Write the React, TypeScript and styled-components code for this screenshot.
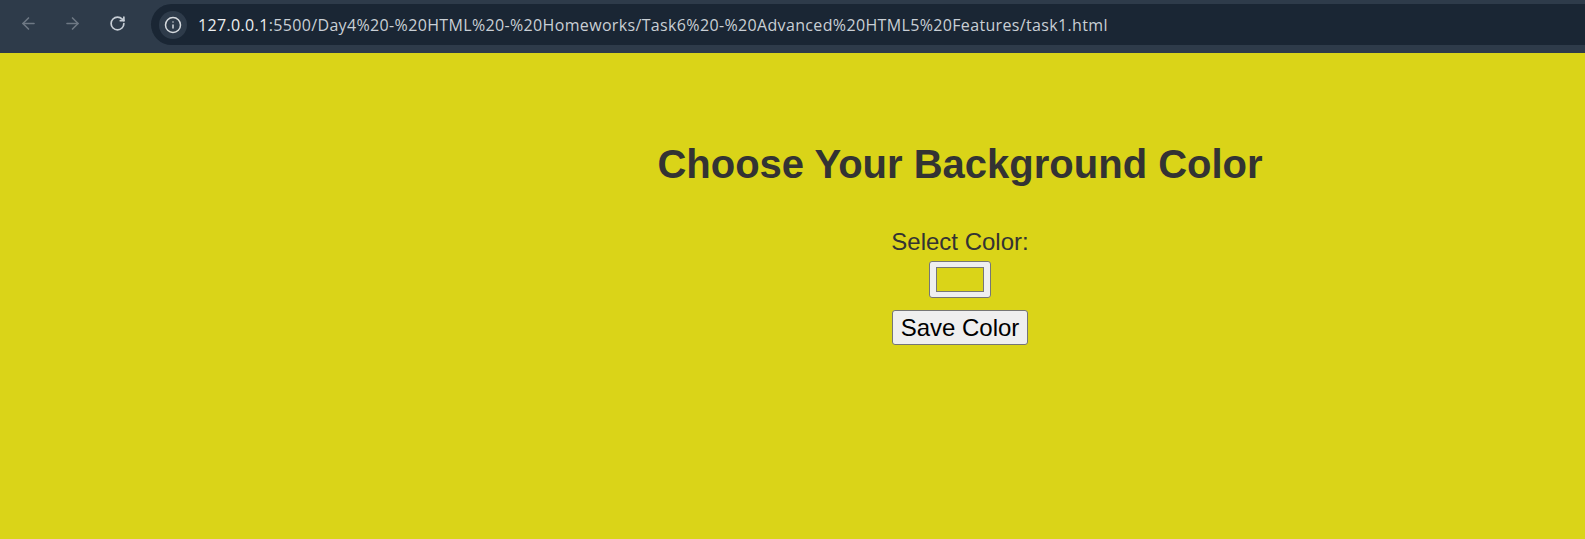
import { FC } from 'react';
import styled, { createGlobalStyle } from 'styled-components';
import { ArrowLeft, ArrowRight, RotateCw, Info } from 'lucide-react';

const GlobalStyle = createGlobalStyle`
    html, body {
        margin: 0;
        padding: 0;
        background: #dad418;
    }

    body {
        font-family: 'Liberation Sans', Arial, sans-serif;
    }
`;

export default function App() {
    return (
        <Page>
            <GlobalStyle />
            <BrowserBar>
                <NavButton dim>
                    <ArrowLeft size={19} strokeWidth={2} />
                </NavButton>
                <NavButton dim>
                    <ArrowRight size={19} strokeWidth={2} />
                </NavButton>
                <NavButton>
                    <RotateCw size={17} strokeWidth={2.4} />
                </NavButton>
                <AddressPill>
                    <SiteInfo>
                        <Info size={18} strokeWidth={2} />
                    </SiteInfo>
                    <Url>
                        <Host>127.0.0.1</Host>
                        :5500/Day4%20-%20HTML%20-%20Homeworks/Task6%20-%20Advanced%20HTML5%20Features/task1.html
                    </Url>
                </AddressPill>
            </BrowserBar>
            <Content>
                <ColorPicker />
            </Content>
        </Page>
    );
}

const ColorPicker: FC = () => (
    <Panel>
        <Title>Choose Your Background Color</Title>
        <Label htmlFor='bgColor'>Select Color:</Label>
        <ColorInput id='bgColor' type='color' defaultValue='#dad418' />
        <SaveButton type='button'>Save Color</SaveButton>
    </Panel>
);

const Page = styled.div`
    display: flex;
    flex-direction: column;
    min-height: 539px;
`;

const BrowserBar = styled.header`
    display: flex;
    align-items: center;
    height: 53px;
    padding: 0 0 6px 0;
    box-sizing: border-box;
    background: #2e3b4a;
`;

const NavButton = styled.div<{ dim?: boolean }>`
    display: flex;
    align-items: center;
    justify-content: center;
    width: 34px;
    height: 34px;
    margin-left: ${({ dim }) => (dim ? '10px' : '11px')};
    color: ${({ dim }) => (dim ? '#6e7884' : '#c7ced6')};

    &:first-child {
        margin-left: 11px;
    }
`;

const AddressPill = styled.div`
    display: flex;
    align-items: center;
    flex: 1;
    height: 41px;
    margin-left: 17px;
    margin-top: 2px;
    padding-left: 8px;
    border-radius: 21px 0 0 21px;
    background: #1a2634;
`;

const SiteInfo = styled.div`
    display: flex;
    align-items: center;
    justify-content: center;
    width: 28px;
    height: 28px;
    border-radius: 50%;
    background: #2e3b4a;
    color: #d6dade;
`;

const Url = styled.div`
    margin-left: 11px;
    font-family: 'Open Sans', 'Noto Sans', sans-serif;
    font-size: 16px;
    letter-spacing: 0.35px;
    color: #c9cfd5;
    white-space: nowrap;
`;

const Host = styled.span`
    color: #eceef0;
`;

const Content = styled.main`
    flex: 1;
    padding-left: 335px;
    background: #dad418;
`;

const Panel = styled.section`
    display: flex;
    flex-direction: column;
    align-items: center;
    padding-top: 88px;
    color: #333333;
`;

const Title = styled.h1`
    margin: 0 0 41px;
    font-size: 40px;
    font-weight: bold;
    line-height: 46px;
`;

const Label = styled.label`
    font-size: 24px;
    line-height: 28px;
`;

const ColorInput = styled.input`
    width: 62px;
    height: 37px;
    margin: 5px 0 0;
    padding: 5px 6px;
    box-sizing: border-box;
    border: 1px solid #767676;
    border-radius: 3px;
    background: #efefef;
    cursor: pointer;

    &::-webkit-color-swatch-wrapper {
        padding: 0;
    }

    &::-webkit-color-swatch {
        border: 1px solid #777777;
        border-radius: 0;
    }
`;

const SaveButton = styled.button`
    margin-top: 12px;
    height: 35px;
    padding: 0 8px;
    font-family: 'Liberation Sans', Arial, sans-serif;
    font-size: 24px;
    color: #000000;
    background: #efefef;
    border: 1px solid #767676;
    border-radius: 3px;
`;
